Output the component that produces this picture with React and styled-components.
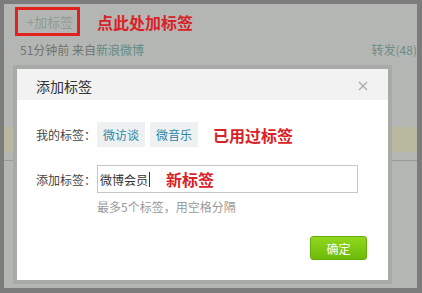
import React from "react";
import styled, { createGlobalStyle } from "styled-components";

const GlobalStyle = createGlobalStyle`
  html, body {
    margin: 0;
    padding: 0;
  }
  body {
    font-family: "Noto Sans CJK SC", "Liberation Sans", sans-serif;
    font-size: 12px;
  }
`;

function App() {
  return (
    <>
      <GlobalStyle />
      <Frame>
        <Page>
          <TopRow>
            <AddTagBox>+加标签</AddTagBox>
            <Note>点此处加标签</Note>
          </TopRow>
          <MetaRow>
            <span>
              51分钟前 来自<SourceLink>新浪微博</SourceLink>
            </span>
            <Forward>转发(48)</Forward>
          </MetaRow>
          <HighlightBand />
          <Divider />

          <Dialog>
            <DialogInner>
              <DialogHeader>
                <DialogTitle>添加标签</DialogTitle>
                <CloseButton aria-label="关闭">
                  <svg width="10" height="10" viewBox="0 0 10 10">
                    <path
                      d="M1 1 L9 9 M9 1 L1 9"
                      stroke="#a8a8a8"
                      strokeWidth="1.2"
                      fill="none"
                    />
                  </svg>
                </CloseButton>
              </DialogHeader>
              <DialogBody>
                <FormRow>
                  <FieldLabel>我的标签：</FieldLabel>
                  <Tag>微访谈</Tag>
                  <Tag>微音乐</Tag>
                  <Note $gap={10}>已用过标签</Note>
                </FormRow>
                <FormRow $top={18}>
                  <FieldLabel>添加标签：</FieldLabel>
                  <TagInput>
                    <InputText>微博会员</InputText>
                    <Caret />
                    <Note $gap={16}>新标签</Note>
                  </TagInput>
                </FormRow>
                <Hint>最多5个标签，用空格分隔</Hint>
                <Actions>
                  <ConfirmButton>确定</ConfirmButton>
                </Actions>
              </DialogBody>
            </DialogInner>
          </Dialog>
        </Page>
      </Frame>
    </>
  );
}
export default App;

const Frame = styled.div`
  width: 422px;
  height: 293px;
  box-sizing: border-box;
  padding: 4px 5px 5px 4px;
  background: #7b7c7b;
`;

const Page = styled.div`
  position: relative;
  height: 100%;
  overflow: hidden;
  background: #b4b6b3;
  padding: 3px 0 0 11px;
  box-sizing: border-box;
`;

const TopRow = styled.div`
  display: flex;
  align-items: center;
  gap: 17px;
`;

const AddTagBox = styled.div`
  width: 65px;
  height: 29px;
  box-sizing: border-box;
  border: 3px solid #e1211c;
  padding-left: 9px;
  display: flex;
  align-items: center;
  font-size: 13px;
  color: #8d9b90;
`;

const Note = styled.span`
  margin-left: ${(p) => p.$gap || 0}px;
  font-size: 16px;
  font-weight: 700;
  color: #d92228;
  white-space: nowrap;
`;

const MetaRow = styled.div`
  display: flex;
  justify-content: space-between;
  margin-top: 7px;
  padding-left: 5px;
  line-height: 14px;
  font-size: 12px;
  color: #6f7470;
`;

const SourceLink = styled.span`
  color: #5e8a86;
`;

const Forward = styled.span`
  color: #6e8c88;
  white-space: nowrap;
`;

const HighlightBand = styled.div`
  margin: 70px 0 0 -11px;
  height: 25px;
  background: #b8b99e;
`;

const Divider = styled.div`
  margin: 8px 0 0 -11px;
  height: 1px;
  background: #979997;
`;

const Dialog = styled.div`
  position: absolute;
  left: 9px;
  top: 61px;
  width: 379px;
  height: 219px;
  box-sizing: border-box;
  border: 4px solid #a8aaa8;
`;

const DialogInner = styled.div`
  height: 100%;
  background: #ffffff;
  display: flex;
  flex-direction: column;
`;

const DialogHeader = styled.div`
  height: 31px;
  flex: none;
  display: flex;
  align-items: center;
  justify-content: space-between;
  padding: 2px 20px 0 19px;
  box-sizing: border-box;
  background: #f2f2f2;
`;

const DialogTitle = styled.span`
  font-size: 14px;
  color: #333333;
`;

const CloseButton = styled.button`
  border: 0;
  padding: 0;
  background: none;
  display: flex;
  align-items: center;
`;

const DialogBody = styled.div`
  display: flex;
  flex-direction: column;
  padding: 22px 21px 0 19px;
`;

const FormRow = styled.div`
  display: flex;
  align-items: center;
  margin-top: ${(p) => p.$top || 0}px;
`;

const FieldLabel = styled.span`
  width: 61px;
  flex: none;
  font-size: 12px;
  color: #444444;
`;

const Tag = styled.span`
  height: 25px;
  padding: 0 6px;
  margin-right: 5px;
  display: flex;
  align-items: center;
  background: #eef1f2;
  color: #2f85a6;
  font-size: 12px;
`;

const TagInput = styled.div`
  width: 261px;
  height: 28px;
  box-sizing: border-box;
  border: 1px solid #c6c6c6;
  display: flex;
  align-items: center;
  padding-left: 2px;
`;

const InputText = styled.span`
  font-size: 12px;
  color: #333333;
`;

const Caret = styled.span`
  width: 1px;
  height: 15px;
  margin-left: 1px;
  background: #333333;
`;

const Hint = styled.div`
  margin: 7px 0 0 61px;
  line-height: 14px;
  font-size: 12px;
  color: #999999;
`;

const Actions = styled.div`
  display: flex;
  justify-content: flex-end;
  margin-top: 22px;
`;

const ConfirmButton = styled.button`
  width: 57px;
  height: 24px;
  border: 1px solid #66ad0c;
  border-radius: 3px;
  background: linear-gradient(180deg, #92d81d 0%, #6cba0a 100%);
  color: #ffffff;
  font-family: "Noto Sans CJK SC", "Liberation Sans", sans-serif;
  font-size: 12px;
  padding: 0;
`;
